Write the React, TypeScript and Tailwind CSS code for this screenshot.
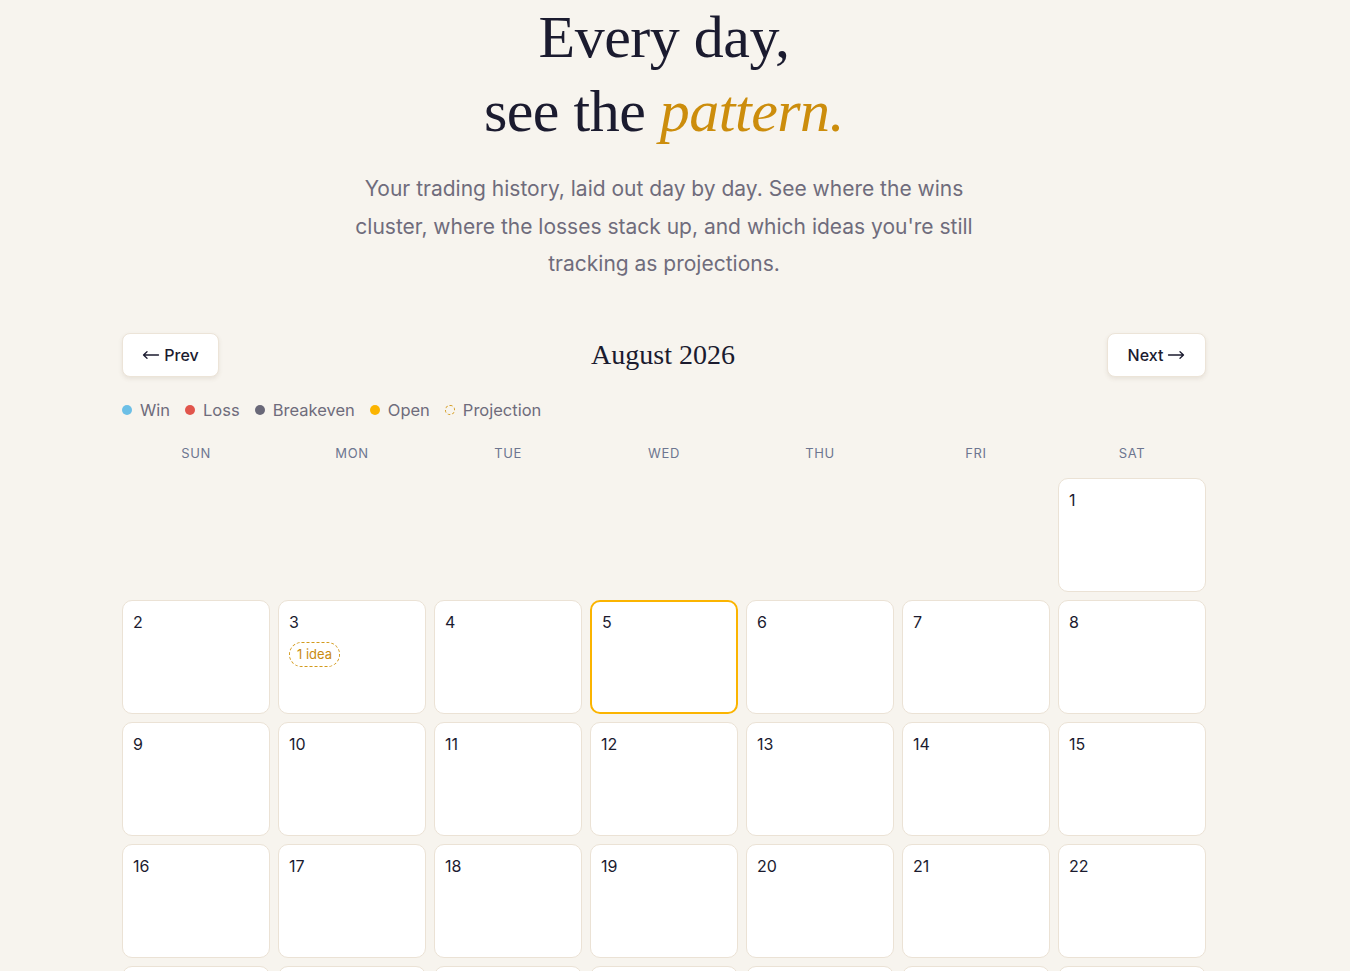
import React from 'react';

const DAYS = ['SUN', 'MON', 'TUE', 'WED', 'THU', 'FRI', 'SAT'];

const LEGEND = [
    { label: 'Win', dot: 'bg-[#6cbfe6]' },
    { label: 'Loss', dot: 'bg-[#e1554c]' },
    { label: 'Breakeven', dot: 'bg-[#696878]' },
    { label: 'Open', dot: 'bg-[#fbb400]' },
    { label: 'Projection', dot: 'border border-dashed border-[#d39a1c]' },
];

const IDEAS: Record<number, number> = { 3: 1 };
const TODAY = 5;

function Arrow({ dir }: { dir: 'left' | 'right' }) {
    return (
        <svg width="18" height="10" viewBox="0 0 18 10" fill="none" stroke="currentColor" strokeWidth="1.3" strokeLinecap="round" strokeLinejoin="round" className={dir === 'right' ? 'rotate-180' : ''}>
            <path d="M1.5 5h15M1.5 5l3.5-3.2M1.5 5l3.5 3.2" />
        </svg>
    );
}

export default function App() {
    // August 2026 starts on a Saturday
    const cells: (number | null)[] = [];
    for (let i = 0; i < 6; i++) cells.push(null);
    for (let d = 1; d <= 31; d++) cells.push(d);
    while (cells.length % 7 !== 0) cells.push(null);

    return (
        <div className="min-h-screen bg-[#f7f4ee] font-['Inter',sans-serif] text-[#1b1b2f]">
            <div className="w-[1328px]">
                <div className="mx-auto w-[1084px] pb-20">
                    <h1 className="text-center font-['Liberation_Serif',serif] text-[60px] leading-[74px] tracking-[-0.5px] text-[#1b1b2f]">
                        Every day,
                        <br />
                        see the <em className="italic text-[#cc8d0c]">pattern.</em>
                    </h1>
                    <p className="mx-auto mt-[22px] w-[630px] text-center text-[21px] leading-[37.5px] text-[#6f6c7c]">
                        Your trading history, laid out day by day. See where the wins cluster, where the losses stack up, and which ideas you're still tracking as projections.
                    </p>

                    <div className="mt-[50px] flex items-center justify-between">
                        <button className="flex h-[44px] w-[97px] items-center justify-center gap-[4px] rounded-lg border border-[#ece4d8] bg-white text-[16px] font-medium text-[#1b1b2f] shadow-[0_2px_4px_rgba(120,100,70,0.12)]">
                            <Arrow dir="left" />
                            Prev
                        </button>
                        <h2 className="font-['Liberation_Serif',serif] text-[28px] text-[#1b1b2f]">August 2026</h2>
                        <button className="flex h-[44px] w-[99px] items-center justify-center gap-[4px] rounded-lg border border-[#ece4d8] bg-white text-[16px] font-medium text-[#1b1b2f] shadow-[0_2px_4px_rgba(120,100,70,0.12)]">
                            Next
                            <Arrow dir="right" />
                        </button>
                    </div>

                    <div className="mt-[21px] flex items-center gap-[15px] text-[16.5px] text-[#6f6c7c]">
                        {LEGEND.map(item => (
                            <div key={item.label} className="flex items-center gap-[8px]">
                                <span className={`inline-block h-[10px] w-[10px] rounded-full ${item.dot}`} />
                                <span>{item.label}</span>
                            </div>
                        ))}
                    </div>

                    <div className="mt-[22px] grid grid-cols-7 gap-2">
                        {DAYS.map(day => (
                            <div key={day} className="text-center text-[13px] tracking-[0.6px] text-[#6d7690]">
                                {day}
                            </div>
                        ))}
                    </div>

                    <div className="mt-[14px] grid grid-cols-7 gap-2">
                        {cells.map((d, i) =>
                            d === null ? (
                                <div key={i} className="h-[114px]" />
                            ) : (
                                <div
                                    key={i}
                                    className={
                                        d === TODAY
                                            ? 'h-[114px] rounded-[10px] border-2 border-[#fbb400] bg-white px-[10px] pt-[10px]'
                                            : 'h-[114px] rounded-[10px] border border-[#ebe2d5] bg-white px-[10px] pt-[11px]'
                                    }
                                >
                                    <div className="text-[16px] leading-[20px] text-[#1b1b2f]">{d}</div>
                                    {IDEAS[d] && (
                                        <span className="mt-[10px] inline-flex h-[25px] items-center rounded-full border border-dashed border-[#d39a1c] px-[7px] text-[13px] text-[#c98b10]">
                                            {IDEAS[d]} idea
                                        </span>
                                    )}
                                </div>
                            )
                        )}
                    </div>
                </div>
            </div>
        </div>
    );
}
